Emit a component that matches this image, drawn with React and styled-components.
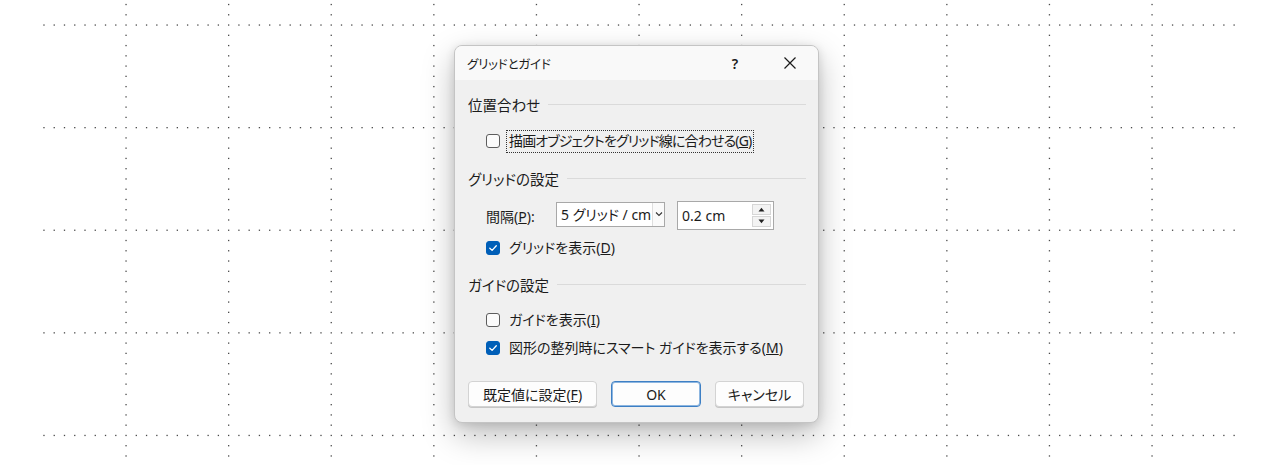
import React from "react";
import styled, { createGlobalStyle } from "styled-components";

const GlobalStyle = createGlobalStyle`
  html, body {
    margin: 0;
    padding: 0;
    background: #ffffff;
  }
  body {
    font-family: "Noto Sans", "Noto Sans CJK JP", sans-serif;
    color: #1b1b1b;
  }
`;

const STEP = 102.6;
const TICK = STEP / 10;
const X0 = 126;
const Y0 = 25;

const GridDots = () => {
  const dots = [];
  // vertical dotted lines, full height
  for (let i = 0; i <= 10; i++) {
    const x = X0 + i * STEP;
    for (let k = -3; k <= 45; k++) {
      const y = Y0 + k * TICK;
      if (y < 0 || y > 465) continue;
      dots.push(<rect key={`v${i}-${k}`} x={x - 0.6} y={y - 0.6} width="1.3" height="1.3" />);
    }
  }
  // horizontal dotted lines
  for (let j = 0; j <= 4; j++) {
    const y = Y0 + j * STEP;
    for (let k = -8; k <= 108; k++) {
      if (k % 10 === 0) continue;
      const x = X0 + k * TICK;
      dots.push(<rect key={`h${j}-${k}`} x={x - 0.6} y={y - 0.6} width="1.3" height="1.3" />);
    }
  }
  return (
    <GridSvg width="1280" height="465" viewBox="0 0 1280 465">
      <g fill="#4a4a4a">{dots}</g>
    </GridSvg>
  );
};

const Check = ({ checked }) => (
  <CheckBox $checked={checked}>
    {checked && (
      <svg width="10" height="10" viewBox="0 0 10 10">
        <path d="M1.8 5.2 L4.1 7.4 L8.3 2.8" fill="none" stroke="#fff" strokeWidth="1.3" strokeLinecap="round" strokeLinejoin="round" />
      </svg>
    )}
  </CheckBox>
);

export default function App() {
  return (
    <>
      <GlobalStyle />
      <Canvas>
        <GridDots />
        <Dialog>
          <TitleBar>
            <TitleText>グリッドとガイド</TitleText>
            <TitleButtons>
              <HelpButton>?</HelpButton>
              <CloseButton>
                <svg width="14" height="14" viewBox="0 0 14 14">
                  <path d="M1.5 1.5 L12.5 12.5 M12.5 1.5 L1.5 12.5" stroke="#1b1b1b" strokeWidth="1.2" fill="none" />
                </svg>
              </CloseButton>
            </TitleButtons>
          </TitleBar>

          <Body>
            <SectionHeader $mt={14}>
              <span>位置合わせ</span>
              <Rule />
            </SectionHeader>
            <CheckRow $mt={17}>
              <Check />
              <FocusLabel>
                描画オブジェクトをグリッド線に合わせる(<u>G</u>)
              </FocusLabel>
            </CheckRow>

            <SectionHeader $mt={17}>
              <span>グリッドの設定</span>
              <Rule />
            </SectionHeader>
            <FieldRow $mt={13}>
              <FieldLabel>
                間隔(<u>P</u>):
              </FieldLabel>
              <Combo>
                <ComboText>5 グリッド / cm</ComboText>
                <ComboArrow>
                  <svg width="8" height="6" viewBox="0 0 8 6">
                    <path d="M1 1.5 L4 4.5 L7 1.5" stroke="#333" strokeWidth="1.1" fill="none" />
                  </svg>
                </ComboArrow>
              </Combo>
              <Spin>
                <SpinText>0.2 cm</SpinText>
                <SpinButtons>
                  <SpinButton>
                    <svg width="7" height="5" viewBox="0 0 7 5">
                      <path d="M0.5 4.5 L3.5 0.8 L6.5 4.5 Z" fill="#222" />
                    </svg>
                  </SpinButton>
                  <SpinButton>
                    <svg width="7" height="5" viewBox="0 0 7 5">
                      <path d="M0.5 0.5 L3.5 4.2 L6.5 0.5 Z" fill="#222" />
                    </svg>
                  </SpinButton>
                </SpinButtons>
              </Spin>
            </FieldRow>
            <CheckRow $mt={8}>
              <Check checked />
              <Label>
                グリッドを表示(<u>D</u>)
              </Label>
            </CheckRow>

            <SectionHeader $mt={16}>
              <span>ガイドの設定</span>
              <Rule />
            </SectionHeader>
            <CheckRow $mt={16}>
              <Check />
              <Label>
                ガイドを表示(<u>I</u>)
              </Label>
            </CheckRow>
            <CheckRow $mt={8}>
              <Check checked />
              <Label>
                図形の整列時にスマート ガイドを表示する(<u>M</u>)
              </Label>
            </CheckRow>

            <ButtonRow>
              <Button $w={129}>
                既定値に設定(<u>F</u>)
              </Button>
              <Button $w={90} $primary>
                OK
              </Button>
              <Button $w={89}>キャンセル</Button>
            </ButtonRow>
          </Body>
        </Dialog>
      </Canvas>
    </>
  );
}

const Canvas = styled.div`
  position: relative;
  width: 1280px;
  height: 465px;
  overflow: hidden;
  display: flex;
  align-items: flex-start;
  padding: 45px 0 0 454px;
  box-sizing: border-box;
`;

const GridSvg = styled.svg`
  position: absolute;
  top: 0;
  left: 0;
`;

const Dialog = styled.div`
  position: relative;
  z-index: 1;
  width: 365px;
  height: 378px;
  box-sizing: border-box;
  background: #f0f0f0;
  border: 1px solid #c4c4c4;
  border-radius: 8px;
  box-shadow: 0 12px 32px rgba(0, 0, 0, 0.26), 0 2px 10px rgba(0, 0, 0, 0.12);
  display: flex;
  flex-direction: column;
  overflow: hidden;
  font-family: "Noto Sans", "Noto Sans CJK JP", sans-serif;
  font-feature-settings: "palt";
`;

const TitleBar = styled.div`
  height: 34px;
  flex: none;
  display: flex;
  align-items: center;
  justify-content: space-between;
  padding-left: 12px;
  background: #f9f9f9;
`;

const TitleText = styled.div`
  font-size: 12.5px;
  color: #1b1b1b;
  letter-spacing: -0.2px;
`;

const TitleButtons = styled.div`
  display: flex;
  align-items: center;
  height: 100%;
`;

const HelpButton = styled.div`
  width: 54px;
  height: 100%;
  display: flex;
  align-items: center;
  justify-content: center;
  font-size: 14px;
  font-weight: 600;
  color: #1b1b1b;
`;

const CloseButton = styled.div`
  width: 56px;
  height: 100%;
  display: flex;
  align-items: center;
  justify-content: center;
`;

const Body = styled.div`
  flex: 1;
  display: flex;
  flex-direction: column;
  padding: 0 12px 0 13px;
  font-size: 14px;
`;

const SectionHeader = styled.div`
  margin-top: ${(p) => p.$mt}px;
  height: 20px;
  display: flex;
  align-items: center;
  gap: 8px;
  font-size: 14.5px;
  white-space: nowrap;
`;

const Rule = styled.div`
  flex: 1;
  height: 1px;
  background: #dadada;
`;

const CheckRow = styled.div`
  margin-top: ${(p) => p.$mt}px;
  margin-left: 18px;
  height: 20px;
  display: flex;
  align-items: center;
  gap: 9px;
  white-space: nowrap;
`;

const CheckBox = styled.div`
  width: 14px;
  height: 14px;
  box-sizing: border-box;
  border-radius: 3px;
  flex: none;
  display: flex;
  align-items: center;
  justify-content: center;
  background: ${(p) => (p.$checked ? "#005fb8" : "#fbfbfb")};
  border: 1px solid ${(p) => (p.$checked ? "#005fb8" : "#5d5d5d")};
`;

const Label = styled.span`
  font-size: 14px;
  line-height: 20px;
`;

const FocusLabel = styled(Label)`
  margin-left: -3px;
  padding: 0 2px;
  height: 21px;
  border: 1px dotted #333;
  display: flex;
  align-items: center;
  letter-spacing: -0.85px;
`;

const FieldRow = styled.div`
  margin-top: ${(p) => p.$mt}px;
  margin-left: 18px;
  height: 29px;
  display: flex;
  align-items: center;
  white-space: nowrap;
`;

const FieldLabel = styled.span`
  width: 70px;
  font-size: 14px;
`;

const Combo = styled.div`
  width: 109px;
  height: 25px;
  box-sizing: border-box;
  border: 1px solid #a8a8a8;
  background: #ffffff;
  display: flex;
  align-items: stretch;
  margin-top: -3px;
`;

const ComboText = styled.div`
  flex: 1;
  padding-left: 4px;
  display: flex;
  align-items: center;
  font-size: 14px;
  overflow: hidden;
`;

const ComboArrow = styled.div`
  width: 11px;
  border-left: 1px solid #dedede;
  display: flex;
  align-items: center;
  justify-content: center;
  background: #fafafa;
`;

const Spin = styled.div`
  margin-left: 12px;
  width: 97px;
  height: 29px;
  box-sizing: border-box;
  border: 1px solid #a8a8a8;
  background: #ffffff;
  display: flex;
  align-items: stretch;
  padding: 2px;
`;

const SpinText = styled.div`
  flex: 1;
  padding-left: 2px;
  display: flex;
  align-items: center;
  font-size: 14px;
`;

const SpinButtons = styled.div`
  width: 19px;
  display: flex;
  flex-direction: column;
  gap: 1px;
`;

const SpinButton = styled.div`
  flex: 1;
  background: #f3f3f3;
  border: 1px solid #d6d6d6;
  display: flex;
  align-items: center;
  justify-content: center;
`;

const ButtonRow = styled.div`
  margin-top: auto;
  margin-bottom: 15px;
  display: flex;
  gap: 14px;
`;

const Button = styled.div`
  width: ${(p) => p.$w}px;
  height: 26px;
  box-sizing: border-box;
  border-radius: 4px;
  background: #fdfdfd;
  border: 1px solid ${(p) => (p.$primary ? "#3d7fc4" : "#d3d3d3")};
  box-shadow: ${(p) => (p.$primary ? "inset 0 0 0 1px #8db6e0" : "0 1px 0 #c6c6c6")};
  display: flex;
  align-items: center;
  justify-content: center;
  font-size: 14px;
  white-space: nowrap;
`;
